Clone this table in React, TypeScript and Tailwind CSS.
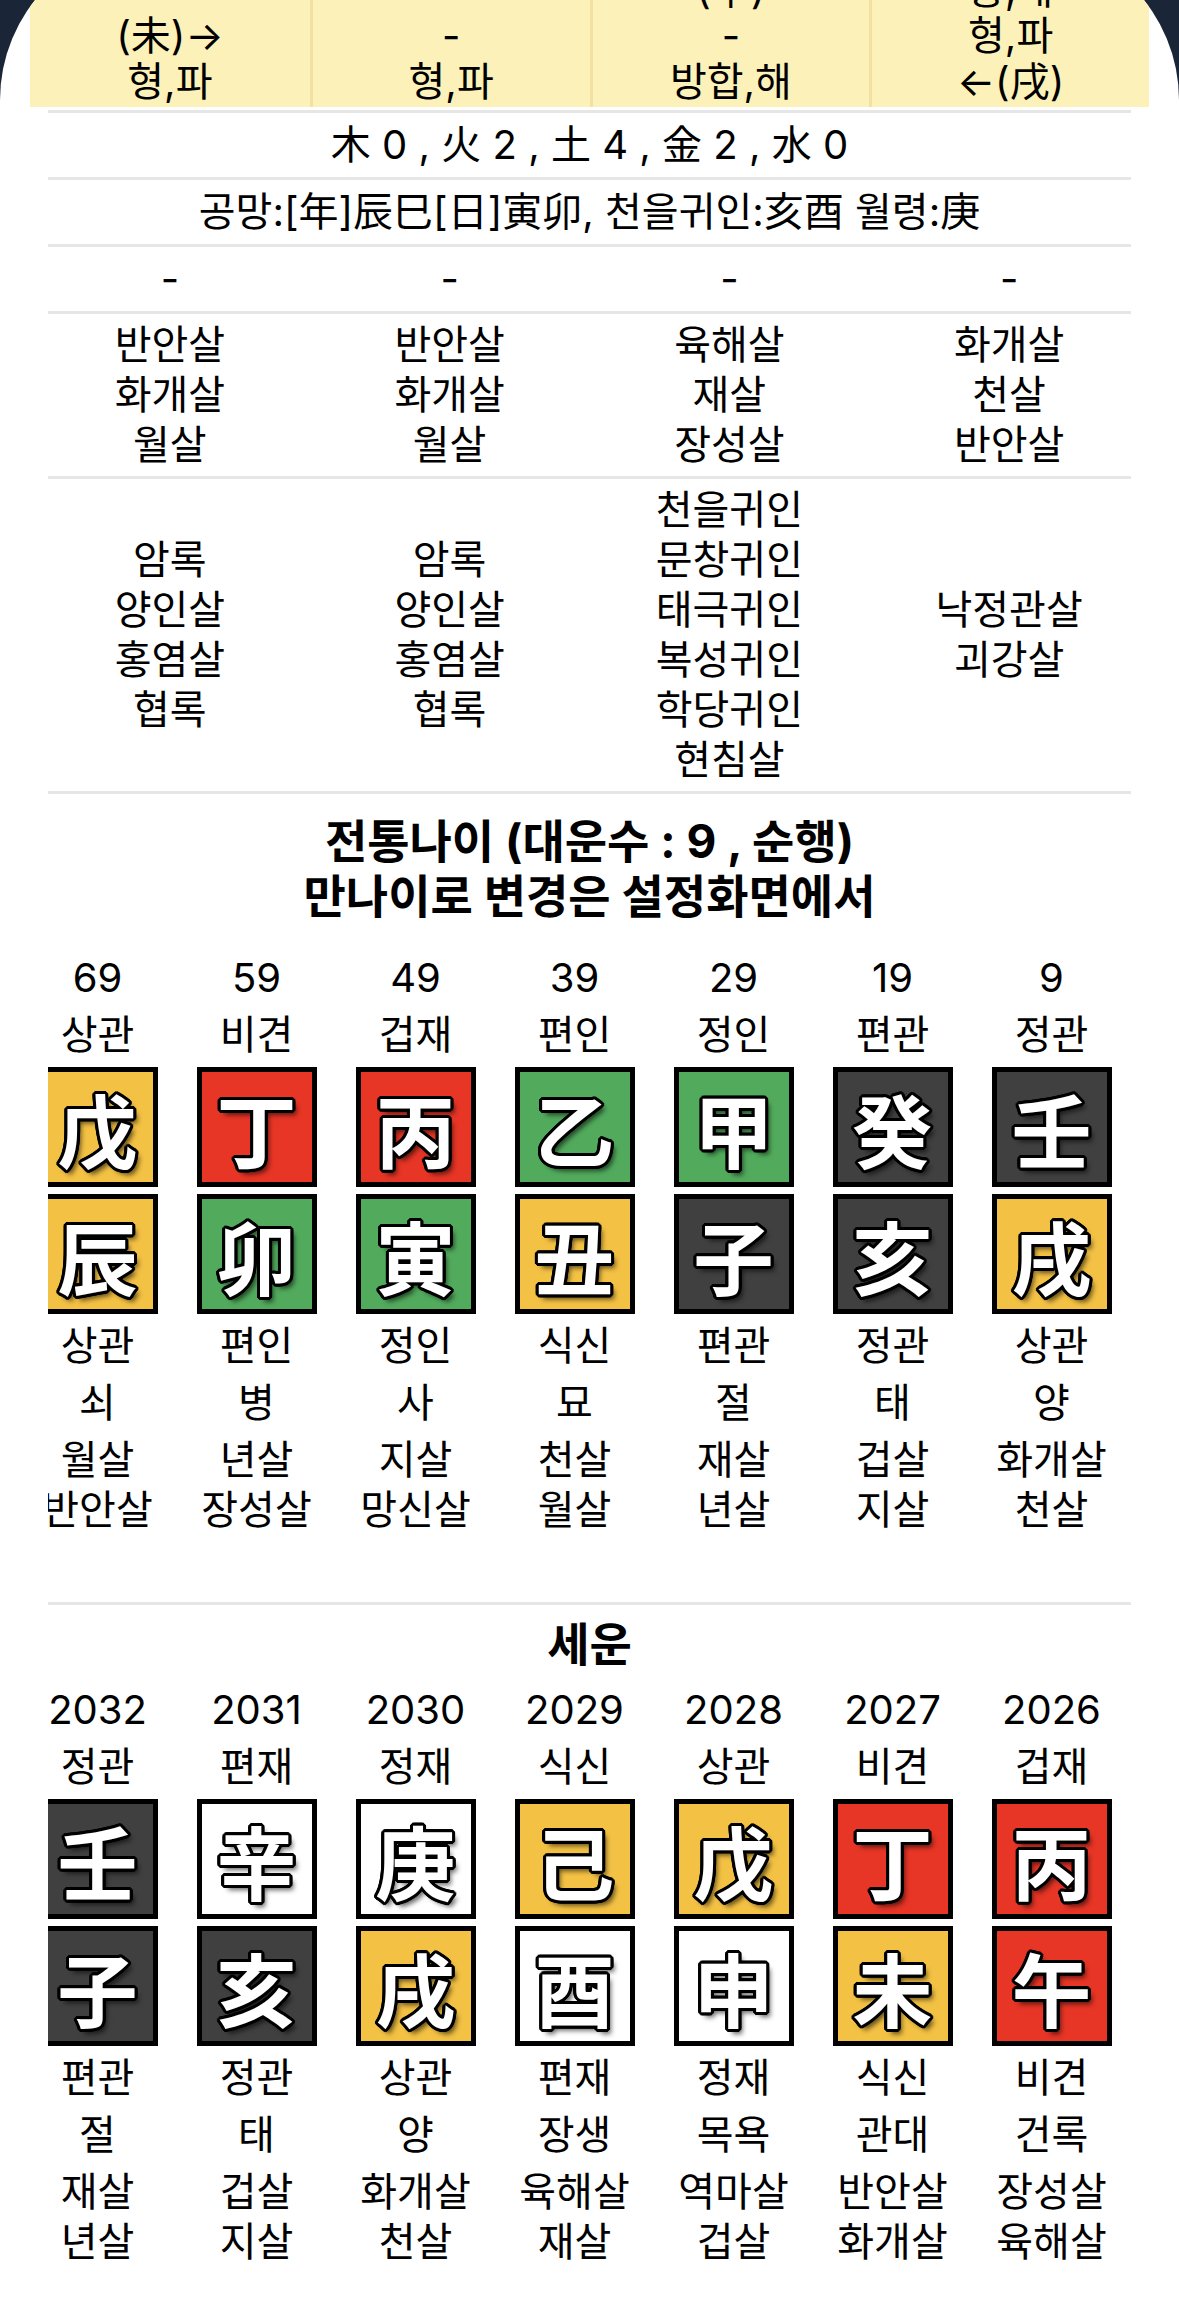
import React from "react";

type C = "Y" | "R" | "G" | "D" | "W";

const BG: Record<C, string> = {
  Y: "bg-[#f3c143]",
  R: "bg-[#e73526]",
  G: "bg-[#52ab5d]",
  D: "bg-[#404040]",
  W: "bg-white",
};

const FONT = "[font-family:Inter,'Noto_Sans_CJK_KR',sans-serif]";

function Line({ extra = "" }: { extra?: string }) {
  return <div className={`mx-[48px] h-[3px] bg-[#e6e6e6] shrink-0 ${extra}`} />;
}

function Box({ ch, c }: { ch: string; c: C }) {
  return (
    <div
      className={`w-[120px] h-[120px] shrink-0 border-[5px] border-black flex items-center justify-center ${BG[c]}`}
    >
      <span className="[font-family:'Noto_Sans_CJK_KR',sans-serif] font-bold text-[80px] leading-none text-white [text-shadow:3px_0_0_#000,-3px_0_0_#000,0_3px_0_#000,0_-3px_0_#000,2px_2px_0_#000,-2px_2px_0_#000,2px_-2px_0_#000,-2px_-2px_0_#000,3px_1px_0_#000,3px_-1px_0_#000,-3px_1px_0_#000,-3px_-1px_0_#000,1px_3px_0_#000,-1px_3px_0_#000,1px_-3px_0_#000,-1px_-3px_0_#000,4px_5px_5px_rgba(0,0,0,0.6)]">
        {ch}
      </span>
    </div>
  );
}

type ColData = {
  top: string;
  sub: string;
  s: [string, C];
  b: [string, C];
  bottom: string;
  un: string;
  sal: string[];
};

function Col({ d }: { d: ColData }) {
  return (
    <div className="w-[159px] shrink-0 flex flex-col items-center gap-[7px]">
      <div className="leading-[50px] whitespace-nowrap">{d.top}</div>
      <div className="leading-[50px] whitespace-nowrap">{d.sub}</div>
      <Box ch={d.s[0]} c={d.s[1]} />
      <Box ch={d.b[0]} c={d.b[1]} />
      <div className="leading-[50px] whitespace-nowrap">{d.bottom}</div>
      <div className="leading-[50px] whitespace-nowrap">{d.un}</div>
      <div className="flex flex-col items-center leading-[50px] whitespace-nowrap">
        {d.sal.map((t, i) => (
          <div key={i}>{t}</div>
        ))}
      </div>
    </div>
  );
}

const daeun: ColData[] = [
  { top: "69", sub: "상관", s: ["戊", "Y"], b: ["辰", "Y"], bottom: "상관", un: "쇠", sal: ["월살", "반안살"] },
  { top: "59", sub: "비견", s: ["丁", "R"], b: ["卯", "G"], bottom: "편인", un: "병", sal: ["년살", "장성살"] },
  { top: "49", sub: "겁재", s: ["丙", "R"], b: ["寅", "G"], bottom: "정인", un: "사", sal: ["지살", "망신살"] },
  { top: "39", sub: "편인", s: ["乙", "G"], b: ["丑", "Y"], bottom: "식신", un: "묘", sal: ["천살", "월살"] },
  { top: "29", sub: "정인", s: ["甲", "G"], b: ["子", "D"], bottom: "편관", un: "절", sal: ["재살", "년살"] },
  { top: "19", sub: "편관", s: ["癸", "D"], b: ["亥", "D"], bottom: "정관", un: "태", sal: ["겁살", "지살"] },
  { top: "9", sub: "정관", s: ["壬", "D"], b: ["戌", "Y"], bottom: "상관", un: "양", sal: ["화개살", "천살"] },
];

const seun: ColData[] = [
  { top: "2032", sub: "정관", s: ["壬", "D"], b: ["子", "D"], bottom: "편관", un: "절", sal: ["재살", "년살"] },
  { top: "2031", sub: "편재", s: ["辛", "W"], b: ["亥", "D"], bottom: "정관", un: "태", sal: ["겁살", "지살"] },
  { top: "2030", sub: "정재", s: ["庚", "W"], b: ["戌", "Y"], bottom: "상관", un: "양", sal: ["화개살", "천살"] },
  { top: "2029", sub: "식신", s: ["己", "Y"], b: ["酉", "W"], bottom: "편재", un: "장생", sal: ["육해살", "재살"] },
  { top: "2028", sub: "상관", s: ["戊", "Y"], b: ["申", "W"], bottom: "정재", un: "목욕", sal: ["역마살", "겁살"] },
  { top: "2027", sub: "비견", s: ["丁", "R"], b: ["未", "Y"], bottom: "식신", un: "관대", sal: ["반안살", "화개살"] },
  { top: "2026", sub: "겁재", s: ["丙", "R"], b: ["午", "R"], bottom: "비견", un: "건록", sal: ["장성살", "육해살"] },
];

const yellowCols: string[][] = [
  ["(未)→", "형,파"],
  ["-", "형,파"],
  ["(午)", "-", "방합,해"],
  ["충,해", "형,파", "←(戌)"],
];

const salRow = [
  ["반안살", "화개살", "월살"],
  ["반안살", "화개살", "월살"],
  ["육해살", "재살", "장성살"],
  ["화개살", "천살", "반안살"],
];

const gwiRow = [
  ["암록", "양인살", "홍염살", "협록"],
  ["암록", "양인살", "홍염살", "협록"],
  ["천을귀인", "문창귀인", "태극귀인", "복성귀인", "학당귀인", "현침살"],
  ["낙정관살", "괴강살"],
];

export default function App() {
  return (
    <div className={`w-[1179px] h-[2322px] bg-[#1b2538] flex flex-col overflow-hidden text-[40px] text-black ${FONT}`}>
      <div className="-mt-[60px] bg-white rounded-t-[160px] overflow-hidden flex flex-col grow">
        {/* yellow relation table */}
        <div className="mx-[30px] h-[167px] bg-[#fcf1b9] grid grid-cols-4 shrink-0">
          {yellowCols.map((col, i) => (
            <div
              key={i}
              className={`flex flex-col justify-end items-center pb-[2px] leading-[46px] ${i > 0 ? "border-l-[3px] border-[#f3e0a2]" : ""}`}
            >
              {col.map((t, j) => (
                <div key={j} className="whitespace-nowrap">{t}</div>
              ))}
            </div>
          ))}
        </div>

        <Line extra="mt-[3px]" />
        <div className="h-[64px] flex items-center justify-center whitespace-nowrap">
          木 0 , 火 2 , 土 4 , 金 2 , 水 0
        </div>
        <Line />
        <div className="h-[64px] flex items-center justify-center whitespace-nowrap">
          공망:[年]辰巳[日]寅卯, 천을귀인:亥酉 월령:庚
        </div>
        <Line />
        <div className="h-[64px] mx-[30px] grid grid-cols-4 items-center text-center">
          <div>-</div>
          <div>-</div>
          <div>-</div>
          <div>-</div>
        </div>
        <Line />
        <div className="mx-[30px] py-[6px] grid grid-cols-4 items-center text-center leading-[50px]">
          {salRow.map((col, i) => (
            <div key={i} className="flex flex-col items-center">
              {col.map((t, j) => (
                <div key={j}>{t}</div>
              ))}
            </div>
          ))}
        </div>
        <Line />
        <div className="mx-[30px] py-[6px] grid grid-cols-4 items-center text-center leading-[50px]">
          {gwiRow.map((col, i) => (
            <div key={i} className="flex flex-col items-center">
              {col.map((t, j) => (
                <div key={j}>{t}</div>
              ))}
            </div>
          ))}
        </div>
        <Line />

        <div className="pt-[20px] flex flex-col items-center font-bold text-[46px] leading-[55px]">
          <div>전통나이 (대운수 : 9 , 순행)</div>
          <div>만나이로 변경은 설정화면에서</div>
        </div>

        <div className="mt-[29px] mx-[48px] flex justify-end overflow-hidden">
          {daeun.map((d, i) => (
            <Col key={i} d={d} />
          ))}
        </div>

        <Line extra="mt-[67px]" />

        <div className="mt-[12px] flex justify-center font-bold text-[46px] leading-[55px]">세운</div>

        <div className="mt-[13px] mx-[48px] flex justify-end overflow-hidden">
          {seun.map((d, i) => (
            <Col key={i} d={d} />
          ))}
        </div>
      </div>
    </div>
  );
}
